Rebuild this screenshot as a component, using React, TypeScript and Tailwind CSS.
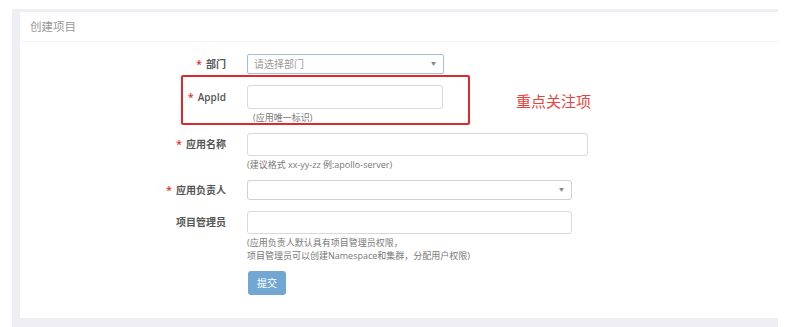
import type { ReactNode } from "react"

const font = { fontFamily: '"Open Sans", "Noto Sans CJK SC", sans-serif' }

function Label({ text, required, h }: { text: string; required?: boolean; h: string }) {
  return (
    <div className={`w-[206px] shrink-0 flex items-center justify-end text-[10px] font-semibold text-[#555] ${h}`}>
      {required && <span className="text-[#d33] mr-[4px] text-[11px]">*</span>}
      {text}
    </div>
  )
}

function Help({ children }: { children: ReactNode }) {
  return <div className="text-[9px] leading-[13px] text-[#777] mt-[2px]">{children}</div>
}

function Arrow() {
  return <span className="text-[5px] text-[#888]">▼</span>
}

export default function App() {
  return (
    <div className="w-[800px] h-[327px] bg-white overflow-hidden" style={font}>
      <div className="ml-[12px] mt-[9px] w-[766px] bg-[#efeff3] pl-[8px] pt-[3px] pb-[9px]">
        <div className="relative bg-white h-[306px]">
          <div className="h-[30px] flex items-center pl-[10px] text-[11.5px] text-[#999] border-b border-[#f3f3f5]">
            创建项目
          </div>

          <div className="flex flex-col pt-[12px]">
            <div className="flex">
              <Label text="部门" required h="h-[20px]" />
              <div className="ml-[21px] w-[197px] h-[20px] border border-[#a8bdd4] rounded-[2px] flex items-center justify-between pl-[6px] pr-[7px] text-[10px] text-[#999]">
                请选择部门
                <Arrow />
              </div>
            </div>

            <div className="flex mt-[11px]">
              <Label text="AppId" required h="h-[24px]" />
              <div className="ml-[21px]">
                <div className="w-[196px] h-[24px] border border-[#d9d9d9] rounded-[3px]" />
                <div className="pl-[6px]">
                  <Help>(应用唯一标识)</Help>
                </div>
              </div>
            </div>

            <div className="flex mt-[9px]">
              <Label text="应用名称" required h="h-[23px]" />
              <div className="ml-[21px]">
                <div className="w-[341px] h-[23px] border border-[#d9d9d9] rounded-[3px]" />
                <Help>(建议格式 xx-yy-zz 例:apollo-server)</Help>
              </div>
            </div>

            <div className="flex mt-[9px]">
              <Label text="应用负责人" required h="h-[20px]" />
              <div className="ml-[21px] w-[325px] h-[20px] border border-[#d0d0d0] rounded-[3px] flex items-center justify-end pr-[7px]">
                <Arrow />
              </div>
            </div>

            <div className="flex mt-[11px]">
              <Label text="项目管理员" h="h-[23px]" />
              <div className="ml-[21px]">
                <div className="w-[325px] h-[23px] border border-[#d9d9d9] rounded-[3px]" />
                <Help>
                  (应用负责人默认具有项目管理员权限，
                  <br />
                  项目管理员可以创建Namespace和集群，分配用户权限)
                </Help>
                <button className="mt-[9px] ml-[1px] w-[38px] h-[24px] rounded-[3px] bg-[#72a6d3] text-white text-[10px]">
                  提交
                </button>
              </div>
            </div>
          </div>

          <div className="absolute left-[161px] top-[63px] w-[289px] h-[50px] border-2 border-[#e0282c] rounded-[2px]" />
          <div className="absolute left-[496px] top-[79px] text-[15px] leading-[20px] text-[#e8423c]">
            重点关注项
          </div>
        </div>
      </div>
    </div>
  )
}
